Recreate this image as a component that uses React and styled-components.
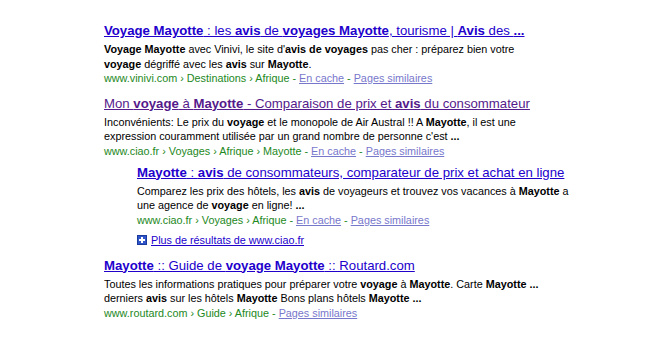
import React from "react";
import styled, { createGlobalStyle } from "styled-components";

const GlobalStyle = createGlobalStyle`
  body {
    margin: 0;
    background: #fff;
    font-family: "Liberation Sans", Arial, sans-serif;
  }
`;

const Page = styled.div`
  padding: 19px 0 0 104px;
`;

const Result = styled.div`
  margin-left: ${(p) => (p.$indent ? "33px" : "0")};
  margin-bottom: ${(p) => p.$gap || "6px"};
`;

const Title = styled.a`
  display: block;
  font-size: 13.2px;
  line-height: 23px;
  color: ${(p) => (p.$visited ? "#551a8b" : "#2200cc")};
  text-decoration: underline;
  white-space: nowrap;
`;

const Snippet = styled.div`
  font-size: 10.8px;
  line-height: 14.5px;
  color: #000;
  white-space: nowrap;
`;

const Cite = styled(Snippet)`
  color: #228822;
`;

const SubLink = styled.a`
  color: #7777cc;
  text-decoration: underline;
`;

const More = styled.div`
  margin-left: 33px;
  margin-bottom: 6px;
  display: flex;
  align-items: center;
  gap: 4px;
  font-size: 10.8px;
  line-height: 14.5px;
  a {
    color: #2200cc;
    text-decoration: underline;
  }
`;

const PlusIcon = () => (
  <svg width="10" height="10" viewBox="0 0 10 10">
    <rect x="0.5" y="0.5" width="9" height="9" fill="#2f55c8" stroke="#1a3a9e" />
    <rect x="4" y="2" width="2" height="6" fill="#fff" />
    <rect x="2" y="4" width="6" height="2" fill="#fff" />
  </svg>
);

const Links = ({ cache = true }) => (
  <>
    {" - "}
    {cache && (
      <>
        <SubLink>En cache</SubLink>
        {" - "}
      </>
    )}
    <SubLink>Pages similaires</SubLink>
  </>
);

export default function App() {
  return (
    <>
      <GlobalStyle />
      <Page>
        <Result>
          <Title>
            <b>Voyage Mayotte</b> : les <b>avis</b> de <b>voyages Mayotte</b>, tourisme | <b>Avis</b> des <b>...</b>
          </Title>
          <Snippet>
            <b>Voyage Mayotte</b> avec Vinivi, le site d'<b>avis de voyages</b> pas cher : préparez bien votre
          </Snippet>
          <Snippet>
            <b>voyage</b> dégriffé avec les <b>avis</b> sur <b>Mayotte</b>.
          </Snippet>
          <Cite>
            www.vinivi.com › Destinations › Afrique
            <Links />
          </Cite>
        </Result>

        <Result $gap="2.5px">
          <Title $visited>
            Mon <b>voyage</b> à <b>Mayotte</b> - Comparaison de prix et <b>avis</b> du consommateur
          </Title>
          <Snippet>
            Inconvénients: Le prix du <b>voyage</b> et le monopole de Air Austral !! A <b>Mayotte</b>, il est une
          </Snippet>
          <Snippet>
            expression couramment utilisée par un grand nombre de personne c'est <b>...</b>
          </Snippet>
          <Cite>
            www.ciao.fr › Voyages › Afrique › Mayotte
            <Links />
          </Cite>
        </Result>

        <Result $indent>
          <Title>
            <b>Mayotte</b> : <b>avis</b> de consommateurs, comparateur de prix et achat en ligne
          </Title>
          <Snippet>
            Comparez les prix des hôtels, les <b>avis</b> de voyageurs et trouvez vos vacances à <b>Mayotte</b> a
          </Snippet>
          <Snippet>
            une agence de <b>voyage</b> en ligne! <b>...</b>
          </Snippet>
          <Cite>
            www.ciao.fr › Voyages › Afrique
            <Links />
          </Cite>
        </Result>

        <More>
          <PlusIcon />
          <a>Plus de résultats de www.ciao.fr</a>
        </More>

        <Result>
          <Title>
            <b>Mayotte</b> :: Guide de <b>voyage Mayotte</b> :: Routard.com
          </Title>
          <Snippet>
            Toutes les informations pratiques pour préparer votre <b>voyage</b> à <b>Mayotte</b>. Carte <b>Mayotte ...</b>
          </Snippet>
          <Snippet>
            derniers <b>avis</b> sur les hôtels <b>Mayotte</b> Bons plans hôtels <b>Mayotte ...</b>
          </Snippet>
          <Cite>
            www.routard.com › Guide › Afrique
            <Links cache={false} />
          </Cite>
        </Result>
      </Page>
    </>
  );
}
